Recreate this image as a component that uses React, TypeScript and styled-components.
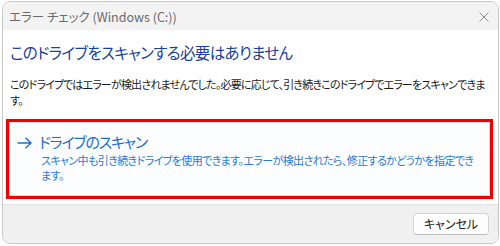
import React from "react";
import styled, { createGlobalStyle } from "styled-components";

const Global = createGlobalStyle`
  html, body { margin: 0; padding: 0; background: #ffffff; }
  body { font-family: "Noto Sans CJK JP", "Noto Sans", sans-serif; }
`;

const Page = styled.div`
  width: 500px;
  height: 246px;
  box-sizing: border-box;
  padding: 1px 1px 2px 2px;
  display: flex;
`;

const Window = styled.div`
  flex: 1;
  display: flex;
  flex-direction: column;
  border: 1px solid #c9c9c9;
  border-radius: 8px;
  overflow: hidden;
  background: #ffffff;
`;

const TitleBar = styled.div`
  height: 28px;
  flex: none;
  background: #f3f3f3;
  display: flex;
  align-items: center;
  justify-content: space-between;
  padding: 0 9px 0 6px;
`;

const TitleText = styled.span`
  font-size: 12.5px;
  color: #6a6a6a;
  font-feature-settings: "palt";
  font-family: "Noto Sans CJK JP", "Noto Sans", sans-serif;
`;

const CloseIcon = styled.svg`
  width: 10px;
  height: 10px;
  margin-top: 1px;
`;

const Content = styled.div`
  flex: 1;
  display: flex;
  flex-direction: column;
  padding: 11px 5px 0 3px;
`;

const Heading = styled.div`
  font-size: 15.5px;
  line-height: 22px;
  letter-spacing: -0.65px;
  color: #1b3f9c;
  font-feature-settings: "palt";
  padding-left: 4px;
  white-space: nowrap;
`;

const Body = styled.div`
  margin-top: 13px;
  font-size: 11px;
  letter-spacing: -0.8px;
  line-height: 16px;
  color: #1a1a1a;
  font-feature-settings: "palt";
  padding-left: 4px;
  white-space: nowrap;
`;

const Line = styled.div``;

const Card = styled.div`
  margin-top: 11px;
  border: 3px solid #ee0000;
  height: 80px;
  box-sizing: border-box;
  display: flex;
`;

const CardInner = styled.div`
  flex: 1;
  border: 1px solid #c7dcf1;
  background: #fbfdff;
  display: grid;
  grid-template-columns: 22px 1fr;
  padding: 8px 0 0 7px;
  align-content: start;
`;

const Arrow = styled.svg`
  width: 15px;
  height: 12px;
  margin-top: 6px;
`;

const CardText = styled.div`
  display: flex;
  flex-direction: column;
  white-space: nowrap;
  font-feature-settings: "palt";
`;

const CardTitle = styled.div`
  font-size: 15px;
  line-height: 22px;
  letter-spacing: -1.2px;
  color: #1d6fce;
`;

const CardDesc = styled.div`
  font-size: 11px;
  letter-spacing: -0.6px;
  line-height: 15px;
  color: #2a7ad6;
  padding-left: 2px;
`;

const Footer = styled.div`
  height: 37px;
  flex: none;
  background: #f0f0f0;
  border-top: 1px solid #e3e3e3;
  display: flex;
  justify-content: flex-end;
  align-items: center;
  padding-right: 9px;
  padding-bottom: 1px;
`;

const Button = styled.button`
  width: 76px;
  height: 22px;
  background: #fdfdfd;
  border: 1px solid #d2d2d2;
  border-bottom-color: #bdbdbd;
  border-radius: 4px;
  font-family: "Noto Sans CJK JP", "Noto Sans", sans-serif;
  font-size: 12px;
  color: #1a1a1a;
  font-feature-settings: "palt";
  padding: 0;
`;

export default function App() {
  return (
    <>
      <Global />
      <Page>
        <Window>
          <TitleBar>
            <TitleText>エラー チェック (Windows (C:))</TitleText>
            <CloseIcon viewBox="0 0 10 10">
              <path d="M0.5 0.5 L9.5 9.5 M9.5 0.5 L0.5 9.5" stroke="#8a8a8a" strokeWidth="1" fill="none" />
            </CloseIcon>
          </TitleBar>
          <Content>
            <Heading>このドライブをスキャンする必要はありません</Heading>
            <Body>
              <Line>このドライブではエラーが検出されませんでした。必要に応じて、引き続きこのドライブでエラーをスキャンできま</Line>
              <Line>す。</Line>
            </Body>
            <Card>
              <CardInner>
                <Arrow viewBox="0 0 15 12">
                  <path d="M0.5 6 H14 M8.5 0.8 L14 6 L8.5 11.2" stroke="#1a73d0" strokeWidth="1.4" fill="none" />
                </Arrow>
                <CardText>
                  <CardTitle>ドライブのスキャン</CardTitle>
                  <CardDesc>
                    <Line>スキャン中も引き続きドライブを使用できます。エラーが検出されたら、修正するかどうかを指定でき</Line>
                    <Line>ます。</Line>
                  </CardDesc>
                </CardText>
              </CardInner>
            </Card>
          </Content>
          <Footer>
            <Button>キャンセル</Button>
          </Footer>
        </Window>
      </Page>
    </>
  );
}
